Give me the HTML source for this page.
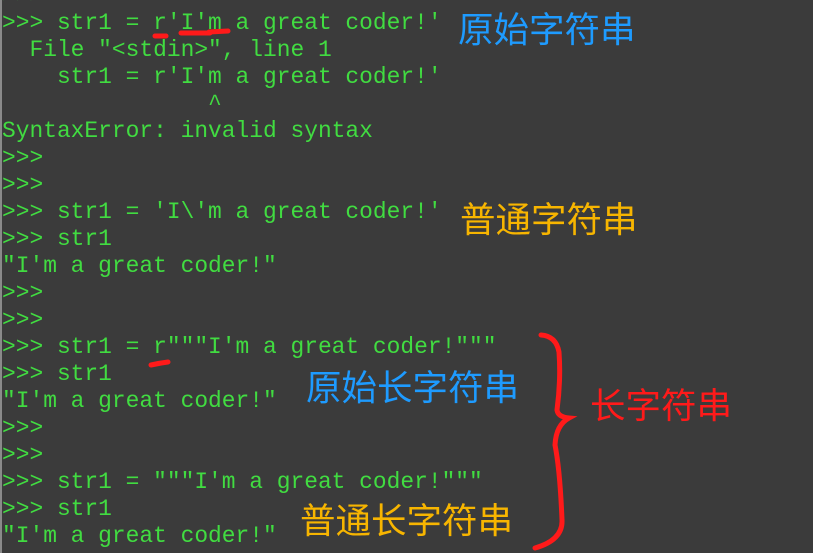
<!DOCTYPE html>
<html><head><meta charset="utf-8"><style>
html,body{margin:0;padding:0;width:813px;height:553px;overflow:hidden}
body{background:#3b3b3b;position:relative}
.edge{position:absolute;left:0;top:0;width:2px;height:553px;background:#8a8a8a}
pre{position:absolute;left:2px;top:-17px;margin:0;font-family:"Liberation Mono",monospace;font-size:22.9px;line-height:27px;color:#41dc41;letter-spacing:0}
.l{position:absolute;font-family:"Liberation Sans","Noto Sans CJK SC",sans-serif;font-size:35.5px;line-height:1;white-space:nowrap}
.b{color:#1e9bff}.o{color:#f7b500}.r{color:#ff1a1a}
svg{position:absolute;left:0;top:0}
</style></head><body>
<div class="edge"></div>
<pre>&gt;&gt;&gt;
&gt;&gt;&gt; str1 = r'I'm a great coder!'
  File "&lt;stdin&gt;", line 1
    str1 = r'I'm a great coder!'
               ^
SyntaxError: invalid syntax
&gt;&gt;&gt;
&gt;&gt;&gt;
&gt;&gt;&gt; str1 = 'I\'m a great coder!'
&gt;&gt;&gt; str1
"I'm a great coder!"
&gt;&gt;&gt;
&gt;&gt;&gt;
&gt;&gt;&gt; str1 = r"""I'm a great coder!"""
&gt;&gt;&gt; str1
"I'm a great coder!"
&gt;&gt;&gt;
&gt;&gt;&gt;
&gt;&gt;&gt; str1 = """I'm a great coder!"""
&gt;&gt;&gt; str1
"I'm a great coder!"
&gt;&gt;&gt;</pre>
<div class="l b" style="left:458px;top:13px">原始字符串</div>
<div class="l o" style="left:460px;top:203px">普通字符串</div>
<div class="l b" style="left:306px;top:371px">原始长字符串</div>
<div class="l r" style="left:590px;top:389px">长字符串</div>
<div class="l o" style="left:300px;top:504px">普通长字符串</div>
<svg width="813" height="553">
<g fill="none" stroke="#ff1a1a" stroke-width="5" stroke-linecap="round">
<path d="M155 36 L166 36"/>
<path d="M181 33 L210 33 M209 32 L228 31"/>
<path d="M151 365 Q160 363 168 362"/>
<path d="M541 335 Q556 336 559 352 Q561 380 557 410 Q558 417 569 418 Q556 425 555 445 Q560 470 562 520 Q563 540 535 548"/>
</g>
</svg>
</body></html>
